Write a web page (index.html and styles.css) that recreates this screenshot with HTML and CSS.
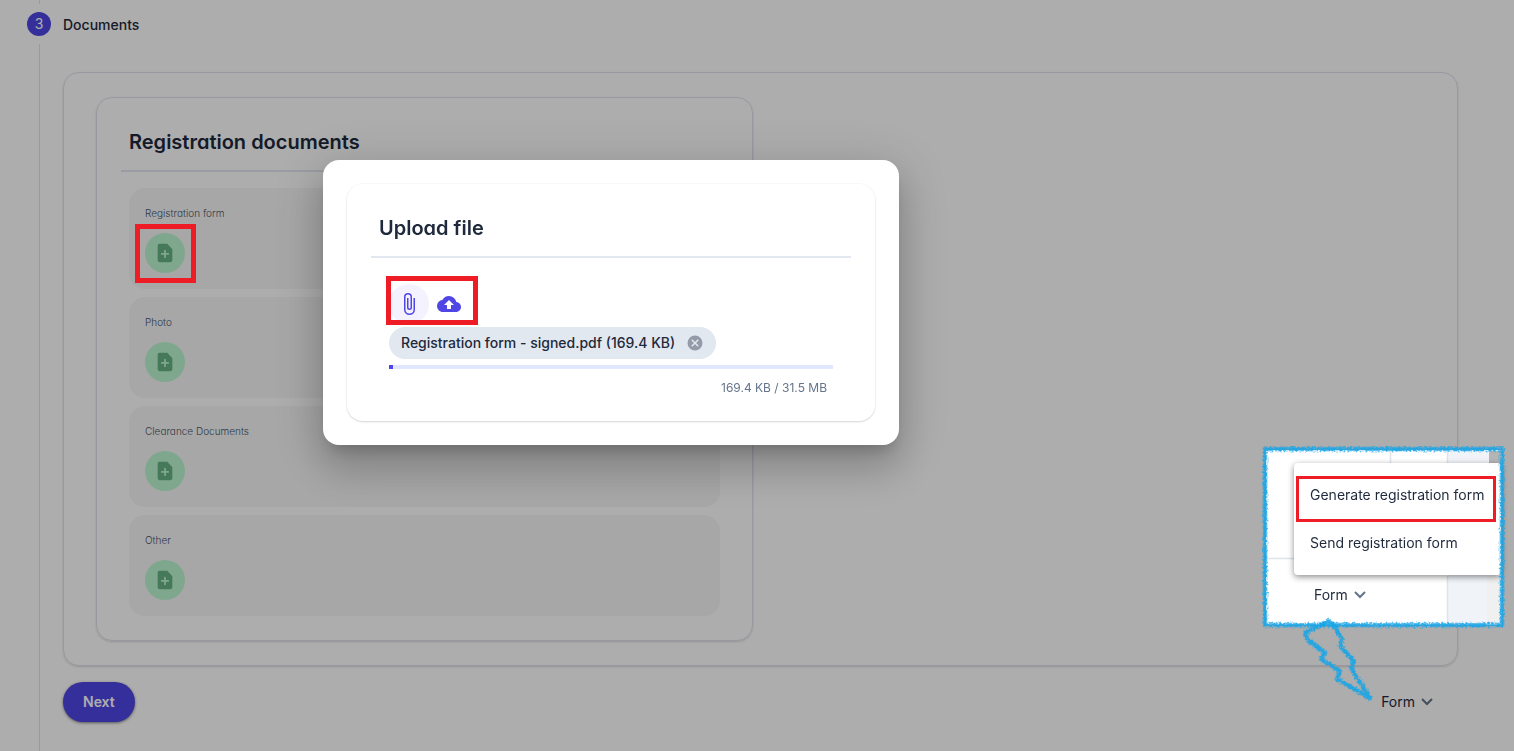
FILE: index.html
```html
<!DOCTYPE html>
<html lang="en">
<head>
  <meta charset="UTF-8">
  <meta name="viewport" content="width=device-width, initial-scale=1.0">
  <title>Registration - Documents</title>
  <link rel="stylesheet" href="styles.css">
</head>
<body>
  <svg class="defs" width="0" height="0" aria-hidden="true">
    <symbol id="note-add" viewBox="0 0 24 24">
      <path d="M6 2h8.500l5.500 6v12a2 2 0 0 1-2 2H6a2 2 0 0 1-2-2V4a2 2 0 0 1 2-2zm6 6.500a1 1 0 0 0-1 1V12H8.500a1 1 0 0 0 0 2H11v2.500a1 1 0 0 0 2 0V14h2.500a1 1 0 0 0 0-2H13V9.500a1 1 0 0 0-1-1z" fill="currentColor" fill-rule="evenodd"/>
    </symbol>
    <symbol id="chevron" viewBox="0 0 12 8">
      <path d="M1 1l5 5 5-5" fill="none" stroke="currentColor" stroke-width="2"/>
    </symbol>
  </svg>

  <main class="page">
    <div class="step-header">
      <span class="step-number">3</span>
      <span class="step-label">Documents</span>
    </div>

    <div class="step-content">
      <section class="panel">
        <div class="card">
          <h2 class="card-title">Registration documents</h2>
          <div class="doc-list">
            <div class="doc">
              <span class="doc-label">Registration form</span>
              <button class="add-button" aria-label="Add registration form"><svg width="22" height="22"><use href="#note-add"/></svg></button>
            </div>
            <div class="doc">
              <span class="doc-label">Photo</span>
              <button class="add-button" aria-label="Add photo"><svg width="22" height="22"><use href="#note-add"/></svg></button>
            </div>
            <div class="doc">
              <span class="doc-label">Clearance Documents</span>
              <button class="add-button" aria-label="Add clearance documents"><svg width="22" height="22"><use href="#note-add"/></svg></button>
            </div>
            <div class="doc">
              <span class="doc-label">Other</span>
              <button class="add-button" aria-label="Add other document"><svg width="22" height="22"><use href="#note-add"/></svg></button>
            </div>
          </div>
        </div>
      </section>

      <div class="actions">
        <button class="next-button">Next</button>
        <button class="form-button">Form <svg width="12" height="8"><use href="#chevron"/></svg></button>
      </div>
    </div>
  </main>

  <div class="backdrop"></div>

  <div class="dialog" role="dialog" aria-labelledby="upload-title">
    <div class="upload-card">
      <h2 class="card-title" id="upload-title">Upload file</h2>
      <div class="upload-body">
        <div class="upload-tools">
          <button class="tool-button tool-active" aria-label="Attach file">
            <svg width="24" height="24" viewBox="0 0 24 24"><path d="M16.5 6v11.500a4 4 0 0 1-8 0V5a2.500 2.500 0 0 1 5 0v10.500a1 1 0 0 1-2 0V6H10v9.500a2.500 2.500 0 0 0 5 0V5a4 4 0 0 0-8 0v12.500a5.500 5.500 0 0 0 11 0V6z" fill="currentColor"/></svg>
          </button>
          <button class="tool-button" aria-label="Upload file">
            <svg width="24" height="24" viewBox="0 0 24 24"><path d="M19.350 10.040A7.490 7.490 0 0 0 12 4C9.110 4 6.600 5.640 5.350 8.040A5.994 5.994 0 0 0 0 14c0 3.310 2.690 6 6 6h13c2.760 0 5-2.240 5-5 0-2.640-2.050-4.780-4.650-4.960zM14 13v4h-4v-4H7l5-5 5 5h-3z" fill="currentColor"/></svg>
          </button>
        </div>
        <div class="chip">
          <span>Registration form - signed.pdf (169.4 KB)</span>
          <button class="chip-remove" aria-label="Remove file">
            <svg width="18" height="18" viewBox="0 0 24 24"><path d="M12 2a10 10 0 1 0 0 20 10 10 0 0 0 0-20zm5 13.590L15.590 17 12 13.410 8.410 17 7 15.590 10.590 12 7 8.410 8.410 7 12 10.590 15.590 7 17 8.410 13.410 12z" fill="currentColor"/></svg>
          </button>
        </div>
        <div class="progress"><div class="progress-bar" style="width: 1%"></div></div>
        <div class="upload-size">169.4 KB / 31.5 MB</div>
      </div>
    </div>
  </div>

  <!-- Help marks over the screen -->
  <div class="mark mark-add"></div>
  <div class="mark mark-tools"></div>

  <div class="callout">
    <svg class="callout-back" width="244" height="260" viewBox="0 0 244 260" aria-hidden="true">
      <path d="M4 4h236v175H4z" fill="#fff"/>
      <path d="M185 5h54v173h-54z" fill="#f0f4f9"/>
      <path d="M225 130h14v48h-14z" fill="#f0f0f0"/>
      <path d="M227 5h12v14h-12z" fill="#b5b5b5"/>
      <path d="M128.500 5v14M4 112.500h29M185.500 5v14M185.500 130v48" stroke="#dfe3ea" stroke-width="1.500" fill="none"/>
    </svg>
    <ul class="menu">
      <li><button class="menu-item">Generate registration form</button></li>
      <li><button class="menu-item">Send registration form</button></li>
    </ul>
    <button class="form-button callout-form">Form <svg width="12" height="8"><use href="#chevron"/></svg></button>
    <svg class="callout-ink" width="244" height="260" viewBox="0 0 244 260" aria-hidden="true">
      <filter id="chalk" x="-5%" y="-5%" width="110%" height="110%">
        <feTurbulence type="fractalNoise" baseFrequency="0.5" numOctaves="2" seed="4"/>
        <feDisplacementMap in="SourceGraphic" scale="5" xChannelSelector="R" yChannelSelector="G"/>
      </filter>
      <g filter="url(#chalk)" fill="none" stroke="#17a5e6" stroke-linejoin="round">
        <path d="M3 3h237v176H3z" stroke-width="5" stroke-opacity="0.5"/>
        <path d="M3 3h237v176H3z" stroke-width="3" stroke-opacity="0.8"/>
        <path d="M66 175L43 187l2 6 18 14-4 6 19 12-3 8 33 19-19-30 3-7-14-15 2-7-9-15z" stroke-width="5" stroke-opacity="0.5"/>
        <path d="M66 175L43 187l2 6 18 14-4 6 19 12-3 8 33 19-19-30 3-7-14-15 2-7-9-15z" stroke-width="3" stroke-opacity="0.8"/>
      </g>
    </svg>
    <div class="mark mark-menu"></div>
  </div>
</body>
</html>
```

FILE: styles.css
```css
* {
  box-sizing: border-box;
}
body {
  margin: 0;
  background-color: #fff;
  color: #1e293b;
  font-family: Inter, "Liberation Sans", sans-serif;
  font-size: 14px;
  line-height: 20px;
}
button {
  border: none;
  padding: 0;
  background: none;
  color: inherit;
  font: inherit;
  cursor: pointer;
}
svg {
  display: block;
}
.defs {
  position: absolute;
}

/* Stepper */
.page {
  display: flex;
  flex-direction: column;
  min-height: 100vh;
}
.step-header {
  display: flex;
  align-items: center;
  gap: 12px;
  height: 44px;
  padding: 4px 0 0 27px;
  background: linear-gradient(#e2e4e9, #e2e4e9) 39px 0 / 1px 4px no-repeat;
}
.step-number {
  width: 24px;
  height: 24px;
  border-radius: 50%;
  background-color: #4f46e5;
  color: #fff;
  line-height: 24px;
  text-align: center;
}
.step-label {
  padding-top: 2px;
  font-weight: 500;
}
.step-content {
  flex: 1;
  margin-left: 39px;
  padding: 28px 56px 28px 23px;
  border-left: 1px solid #e2e4e9;
}

/* Cards */
.panel {
  display: grid;
  grid-template-columns: 1fr 1fr;
  gap: 16px;
  padding: 24px 32px;
  border: 1px solid #e0e2ec;
  border-radius: 16px;
  box-shadow: 0 1px 2px rgba(0, 0, 0, 0.15);
}
.card {
  padding-bottom: 24px;
  border: 1px solid #dfe2ec;
  border-radius: 16px;
  box-shadow: 0 1px 2px rgba(0, 0, 0, 0.15);
}
.card-title {
  margin: 0 24px;
  padding: 28px 8px 12px;
  border-bottom: 2px solid #e2e8f0;
  font-size: 20px;
  font-weight: 600;
  line-height: 32px;
  font-feature-settings: "cv11";
}
.doc-list {
  display: flex;
  flex-direction: column;
  gap: 8px;
  padding: 16px 32px 0;
}
.doc {
  display: flex;
  flex-direction: column;
  align-items: flex-start;
  gap: 10px;
  padding: 16px;
  border-radius: 16px;
  background-color: #f7f7f7;
}
.doc-label {
  color: #475569;
  font-size: 10px;
  font-weight: 300;
  line-height: 19px;
  font-feature-settings: "cv11";
}
.add-button {
  display: flex;
  align-items: center;
  justify-content: center;
  width: 40px;
  height: 40px;
  border-radius: 50%;
  background-color: #bbf7d0;
  color: #67b385;
}

/* Bottom row */
.actions {
  display: flex;
  align-items: center;
  justify-content: space-between;
  padding: 16px 25px 0 0;
}
.next-button {
  height: 40px;
  padding: 0 20px;
  border-radius: 20px;
  background-color: #4f46e5;
  box-shadow: 0 1px 3px rgba(0, 0, 0, 0.5);
  color: #fff;
  font-weight: 600;
}
.form-button {
  display: flex;
  align-items: center;
  gap: 6px;
}
.form-button svg {
  color: #64748b;
}

/* Upload dialog */
.backdrop {
  position: fixed;
  inset: 0;
  background-color: rgba(0, 0, 0, 0.32);
}
.dialog {
  position: absolute;
  top: 160px;
  left: 323px;
  width: 576px;
  padding: 24px;
  border-radius: 16px;
  background-color: #fff;
  box-shadow: 0 11px 15px -7px rgba(0, 0, 0, 0.2), 0 24px 38px 3px rgba(0, 0, 0, 0.14), 0 9px 46px 8px rgba(0, 0, 0, 0.12);
}
.upload-card {
  padding-bottom: 24px;
  border-radius: 16px;
  box-shadow: 0 0 0 1px rgba(0, 0, 0, 0.02), 0 1px 2px rgba(0, 0, 0, 0.15);
}
.upload-body {
  padding: 26px 42px 0;
}
.upload-tools {
  display: flex;
  margin-bottom: 3px;
}
.tool-button {
  display: flex;
  align-items: center;
  justify-content: center;
  width: 40px;
  height: 40px;
  border-radius: 50%;
  color: #4f46e5;
}
.tool-active {
  background-color: #f4f2fe;
}
.chip {
  display: inline-flex;
  align-items: center;
  gap: 11px;
  height: 32px;
  padding: 0 12px;
  border-radius: 16px;
  background-color: #e2e8f0;
  font-weight: 500;
  vertical-align: top;
}
.chip-remove {
  color: #949ba8;
}
.progress {
  height: 4px;
  margin-top: 6px;
  background-color: #e0e7ff;
}
.progress-bar {
  height: 4px;
  background-color: #4f46e5;
}
.upload-size {
  padding: 10px 6px 0 0;
  color: #64748b;
  font-size: 12px;
  line-height: 18px;
  text-align: right;
  font-feature-settings: "cv11";
}

/* Help marks */
.mark {
  position: absolute;
  border: 5px solid #ee1c25;
}
.mark-add {
  top: 224px;
  left: 135px;
  width: 61px;
  height: 59px;
}
.mark-tools {
  top: 276px;
  left: 386px;
  width: 92px;
  height: 49px;
}
.mark-menu {
  top: 30px;
  left: 34px;
  width: 200px;
  height: 46px;
  border-width: 3px;
}
.callout {
  position: absolute;
  top: 446px;
  right: 8px;
  width: 244px;
  height: 260px;
  padding: 17px 5px 0 32px;
}
.callout-back,
.callout-ink {
  position: absolute;
  top: 0;
  left: 0;
}
.callout-ink {
  pointer-events: none;
}
.menu {
  position: relative;
  margin: 0;
  padding: 8px 0;
  border-radius: 4px;
  background-color: #fff;
  box-shadow: 0 2px 6px rgba(0, 0, 0, 0.45);
  list-style: none;
}
.menu-item {
  display: block;
  width: 100%;
  height: 48px;
  padding: 0 16px;
  text-align: left;
  white-space: nowrap;
}
.callout-form {
  position: relative;
  margin: 10px 0 0 20px;
}
```
